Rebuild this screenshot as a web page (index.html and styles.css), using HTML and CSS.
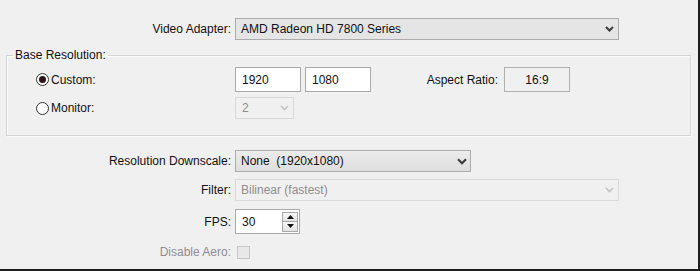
FILE: index.html
```html
<!DOCTYPE html>
<html>
<head>
	<title>Video Settings</title>
	<meta charset="utf-8">
	<link rel="stylesheet" href="styles.css">
</head>
<body>
<div class="window">

	<div class="row">
		<span class="lbl">Video Adapter:</span>
		<div class="combo combo-adapter">
			<span class="combo-text">AMD Radeon HD 7800 Series</span>
			<svg class="chev" width="9" height="6" viewBox="0 0 9 6"><path d="M1 1 L4.5 4.5 L8 1" fill="none" stroke="#3c3c3c" stroke-width="2"/></svg>
		</div>
	</div>

	<fieldset class="group">
		<legend>Base Resolution:</legend>
		<div class="row row-custom">
			<label class="opt"><span class="radio checked"></span>Custom:</label>
			<div class="field">1920</div>
			<div class="field">1080</div>
			<span class="lbl-aspect">Aspect Ratio:</span>
			<div class="readout">16:9</div>
		</div>
		<div class="row row-monitor">
			<label class="opt"><span class="radio"></span>Monitor:</label>
			<div class="combo combo-monitor disabled">
				<span class="combo-text">2</span>
				<svg class="chev" width="9" height="6" viewBox="0 0 9 6"><path d="M1 1 L4.5 4.5 L8 1" fill="none" stroke="#c4c4c4" stroke-width="1.6"/></svg>
			</div>
		</div>
	</fieldset>

	<div class="row row-downscale">
		<span class="lbl">Resolution Downscale:</span>
		<div class="combo combo-downscale">
			<span class="combo-text">None&nbsp; (1920x1080)</span>
			<svg class="chev" width="10" height="7" viewBox="0 0 10 7"><path d="M1 1.2 L5 5.2 L9 1.2" fill="none" stroke="#3c3c3c" stroke-width="2.2"/></svg>
		</div>
	</div>

	<div class="row row-filter">
		<span class="lbl">Filter:</span>
		<div class="combo combo-filter disabled">
			<span class="combo-text">Bilinear (fastest)</span>
			<svg class="chev" width="9" height="6" viewBox="0 0 9 6"><path d="M1 1 L4.5 4.5 L8 1" fill="none" stroke="#c4c4c4" stroke-width="1.6"/></svg>
		</div>
	</div>

	<div class="row row-fps">
		<span class="lbl">FPS:</span>
		<div class="field field-spin">
			<span class="spin-value">30</span>
			<div class="spin">
				<div class="spin-btn"><svg width="7" height="4" viewBox="0 0 7 4"><path d="M0 4 L3.5 0 L7 4 Z" fill="#111"/></svg></div>
				<div class="spin-btn"><svg width="7" height="4" viewBox="0 0 7 4"><path d="M0 0 L3.5 4 L7 0 Z" fill="#111"/></svg></div>
			</div>
		</div>
	</div>

	<div class="row row-aero">
		<span class="lbl lbl-disabled">Disable Aero:</span>
		<span class="check"></span>
	</div>

</div>
</body>
</html>
```

FILE: styles.css
```css
body {
    margin: 0;
    font-family: "Liberation Sans", Arial, sans-serif;
    font-size: 12px;
    color: #111;
    background-color: #f0f0f0;
}

.window {
    width: 700px;
    height: 271px;
    box-sizing: border-box;
    padding-top: 18px;
    border-right: 2px solid #1e1e1e;
    border-bottom: 2px solid #1e1e1e;
    background-color: #f0f0f0;
}

.row {
    display: flex;
    align-items: center;
}

.lbl {
    width: 235px;
    padding-right: 4px;
    box-sizing: border-box;
    text-align: right;
    flex-shrink: 0;
}

.lbl-disabled {
    color: #8e8e8e;
}

/* combo boxes */

.combo {
    height: 22px;
    box-sizing: border-box;
    display: flex;
    align-items: center;
    justify-content: space-between;
    padding: 0 4px 0 5px;
    border: 1px solid #acacac;
    background: linear-gradient(#ececec, #dedede);
}

.combo.disabled {
    border-color: #d9d9d9;
    background: #f0f0f0;
    color: #8d8d8d;
}

.combo-adapter {
    width: 384px;
    background: #e5e5e5;
}

.combo-monitor {
    width: 59px;
    padding-left: 6px;
}

.combo-downscale {
    width: 236px;
    padding-right: 3px;
}

.combo-filter {
    width: 384px;
}

.chev {
    display: block;
}

/* base resolution group */

.group {
    margin: 8px 7px 0 6px;
    padding: 5px 0 16px 0;
    min-width: 0;
    border: 1px solid #d5d5d5;
    box-shadow: inset 1px 1px 0 #fafafa, 1px 1px 0 #fafafa;
}

.group legend {
    margin-left: 6px;
    padding: 0 2px;
    line-height: 14px;
}

.row-monitor {
    margin-top: 5px;
}

.opt {
    width: 228px;
    padding-left: 29px;
    box-sizing: border-box;
    display: flex;
    align-items: center;
    flex-shrink: 0;
}

.radio {
    width: 13px;
    height: 13px;
    box-sizing: border-box;
    margin-right: 2px;
    border: 1px solid #333;
    border-radius: 50%;
    background-color: #fff;
    display: flex;
    align-items: center;
    justify-content: center;
}

.radio.checked::after {
    content: "";
    width: 7px;
    height: 7px;
    border-radius: 50%;
    background-color: #2a1616;
}

.field {
    width: 66px;
    height: 25px;
    box-sizing: border-box;
    margin-right: 4px;
    padding: 0 6px;
    border: 1px solid #a9a9a9;
    background-color: #fff;
    display: flex;
    align-items: center;
}

.lbl-aspect {
    width: 129px;
    padding-right: 6px;
    box-sizing: border-box;
    text-align: right;
}

.readout {
    width: 66px;
    height: 25px;
    box-sizing: border-box;
    border: 1px solid #b0b0b0;
    display: flex;
    align-items: center;
    justify-content: center;
}

/* lower rows */

.row-downscale {
    margin-top: 14px;
}

.row-filter {
    margin-top: 7px;
}

.row-fps {
    margin-top: 8px;
}

.field-spin {
    width: 65px;
    justify-content: space-between;
    padding-right: 1px;
}

.spin {
    display: flex;
    flex-direction: column;
}

.spin-btn {
    width: 16px;
    height: 10px;
    box-sizing: border-box;
    border: 1px solid #a8a8a8;
    background: linear-gradient(#f6f6f6, #e2e2e2);
    display: flex;
    align-items: center;
    justify-content: center;
}

.spin-btn + .spin-btn {
    border-top: none;
    height: 10px;
}

.row-aero {
    margin-top: 11px;
}

.check {
    width: 13px;
    height: 13px;
    box-sizing: border-box;
    margin-left: 2px;
    border: 1px solid #c8c8c8;
    background-color: #e8e8e8;
}
```
